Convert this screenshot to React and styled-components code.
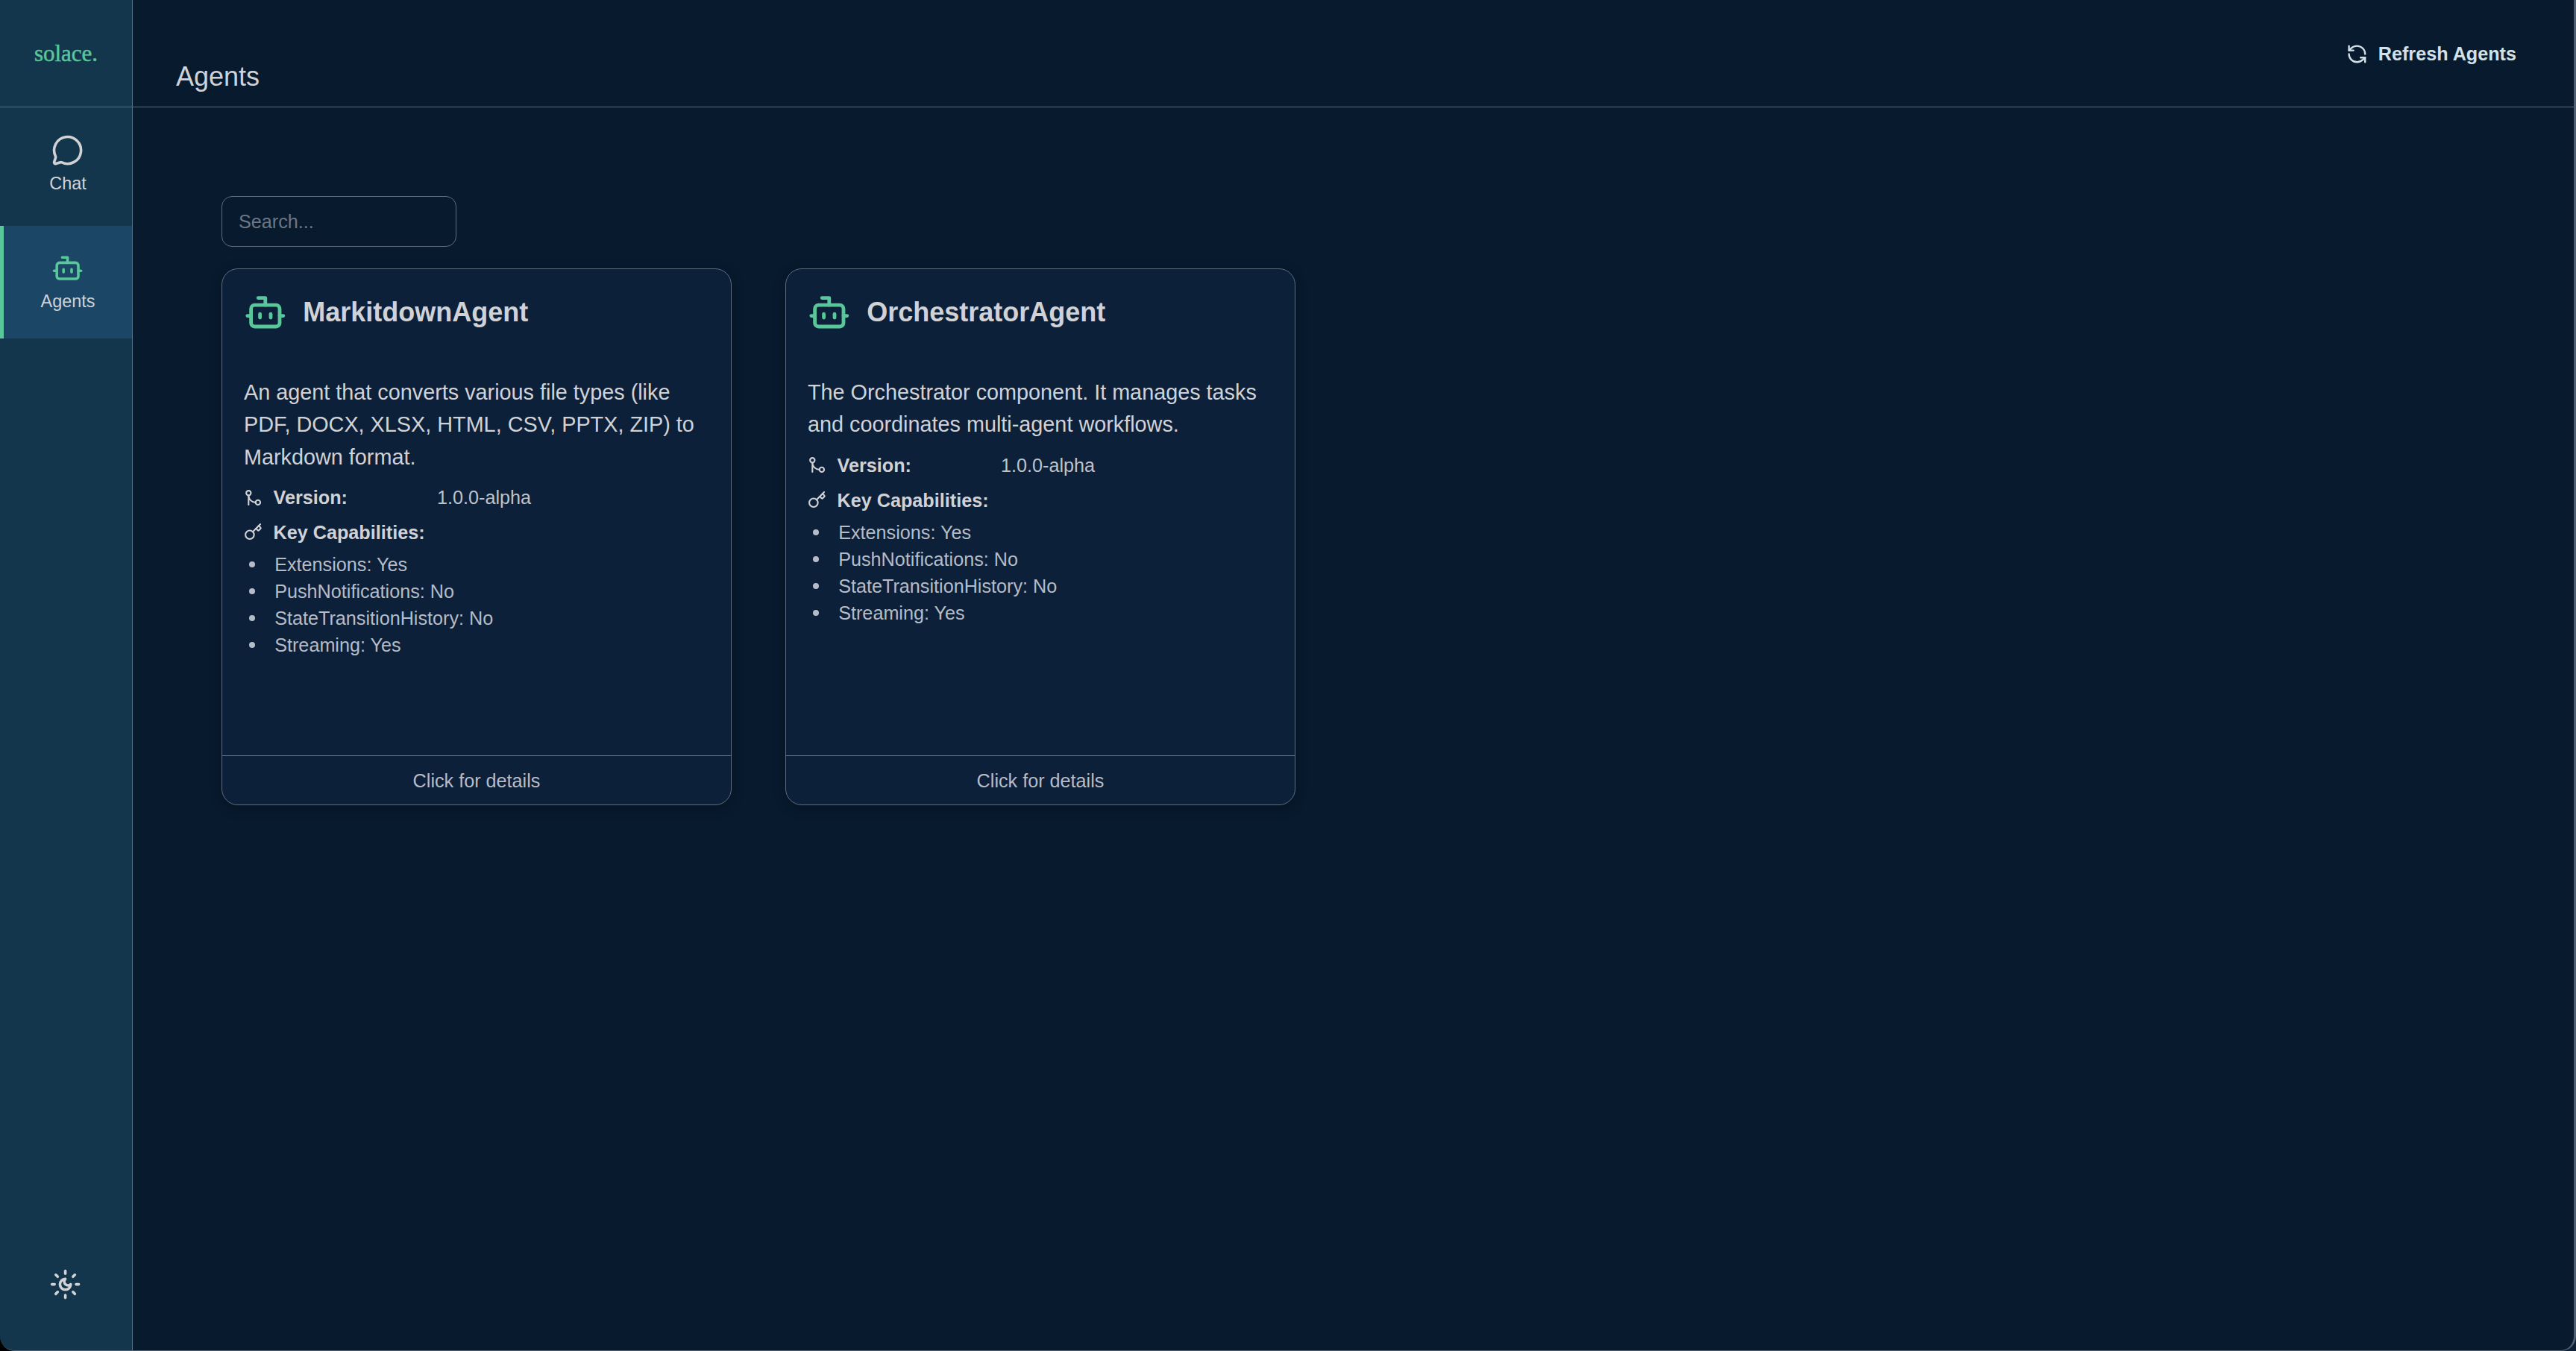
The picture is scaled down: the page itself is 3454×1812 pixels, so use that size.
import React from "react";
import styled, { createGlobalStyle } from "styled-components";
import { Bot, GitMerge, Key, MessageCircle, RefreshCcw } from "lucide-react";

const agents = [
	{
		name: "MarkitdownAgent",
		description:
			"An agent that converts various file types (like PDF, DOCX, XLSX, HTML, CSV, PPTX, ZIP) to Markdown format.",
	},
	{
		name: "OrchestratorAgent",
		description:
			"The Orchestrator component. It manages tasks and coordinates multi-agent workflows.",
	},
];

const capabilities = [
	"Extensions: Yes",
	"PushNotifications: No",
	"StateTransitionHistory: No",
	"Streaming: Yes",
];

const green = "#58c79a";
const line = "#5d6e80";
const textColor = "#d1d2d6";

const GlobalStyle = createGlobalStyle`
	html, body {
		margin: 0;
		padding: 0;
		background: linear-gradient(to right, #000 50%, #0d2035 50%);
	}
	* {
		box-sizing: border-box;
	}
`;

const Shell = styled.div`
	width: 3454px;
	height: 1812px;
	display: flex;
	overflow: hidden;
	border-right: 3px solid #4f6072;
	border-bottom: 1px solid #4f6072;
	border-radius: 0 0 20px 20px;
	background: #071a2e;
	font-family: "Liberation Sans", Arial, sans-serif;
	color: ${textColor};
`;

const Sidebar = styled.aside`
	width: 178px;
	flex-shrink: 0;
	display: flex;
	flex-direction: column;
	background: #14364c;
	border-right: 1px solid ${line};
`;

const Logo = styled.div`
	height: 144px;
	flex-shrink: 0;
	display: flex;
	align-items: center;
	justify-content: center;
	border-bottom: 1px solid ${line};
	font-family: "Liberation Serif", serif;
	font-size: 31px;
	-webkit-text-stroke: 0.5px ${green};
	color: ${green};
`;

const Nav = styled.nav`
	display: flex;
	flex-direction: column;
	gap: 7px;
	flex: 1;
	padding-top: 1px;
`;

const NavItem = styled.div`
	height: 151px;
	display: flex;
	flex-direction: column;
	align-items: center;
	justify-content: center;
	gap: 7px;
	border-left: 5px solid ${(p) => (p.$active ? green : "transparent")};
	background: ${(p) => (p.$active ? "#1b4666" : "transparent")};
	color: ${(p) => (p.$active ? green : textColor)};
`;

const NavLabel = styled.span`
	font-size: 23.4px;
	line-height: 30px;
	color: ${textColor};
`;

const ThemeButton = styled.div`
	height: 135px;
	flex-shrink: 0;
	display: flex;
	align-items: flex-start;
	justify-content: center;
	padding: 25px 2px 0 0;
	color: ${textColor};
`;

const Main = styled.main`
	flex: 1;
	display: flex;
	flex-direction: column;
	min-width: 0;
`;

const Header = styled.header`
	height: 144px;
	flex-shrink: 0;
	display: flex;
	justify-content: space-between;
	padding: 0 77px 0 58px;
	border-bottom: 1px solid ${line};
`;

const Title = styled.h1`
	align-self: flex-end;
	margin: 0 0 15px;
	font-size: 36px;
	line-height: 50px;
	font-weight: 400;
`;

const RefreshButton = styled.div`
	align-self: flex-start;
	margin-top: 54px;
	display: flex;
	align-items: center;
	gap: 14.4px;
	font-size: 25.2px;
	line-height: 36px;
	font-weight: 700;
	color: #d2e0e8;
`;

const Content = styled.div`
	padding: 119px 119px 0;
	display: flex;
	flex-direction: column;
	gap: 29px;
`;

const SearchInput = styled.input`
	width: 315px;
	height: 68px;
	padding: 0 22px;
	border: 1px solid ${line};
	border-radius: 14px;
	outline: none;
	background: transparent;
	font-family: inherit;
	font-size: 25.2px;
	color: ${textColor};
	&::placeholder {
		color: #6b7785;
		opacity: 1;
	}
`;

const CardRow = styled.div`
	display: flex;
	gap: 72px;
`;

const Card = styled.article`
	width: 684px;
	height: 720px;
	display: flex;
	flex-direction: column;
	border: 1px solid ${line};
	border-radius: 22px;
	background: #0d2039;
	box-shadow: 0 4px 16px rgba(0, 0, 0, 0.25);
`;

const CardBody = styled.div`
	flex: 1;
	padding: 29px 29px 0;
`;

const CardHeader = styled.div`
	display: flex;
	align-items: center;
	gap: 21.6px;
	margin-bottom: 57.6px;
	color: ${green};
`;

const CardTitle = styled.h2`
	margin: 0;
	font-size: 36px;
	line-height: 50px;
	font-weight: 700;
	color: ${textColor};
`;

const Description = styled.p`
	margin: 0 0 14.4px;
	font-size: 28.8px;
	line-height: 43.2px;
`;

const InfoRow = styled.div`
	display: flex;
	align-items: center;
	gap: 14.4px;
	margin-bottom: ${(p) => p.$gap || "10.8px"};
	font-size: 25.2px;
	line-height: 36px;
`;

const InfoLabel = styled.span`
	width: ${(p) => p.$width || "auto"};
	font-weight: 700;
`;

const InfoValue = styled.span`
	color: #bcc3cd;
`;

const CapabilityList = styled.ul`
	margin: 0;
	padding: 0 0 0 7.4px;
	list-style: none;
	font-size: 25.2px;
	line-height: 36px;
	color: #b5bcc7;
`;

const CapabilityItem = styled.li`
	display: flex;
	align-items: center;
	gap: 25.8px;
	&::before {
		content: "";
		width: 8px;
		height: 8px;
		border-radius: 50%;
		background: currentColor;
	}
`;

const CardFooter = styled.div`
	padding: 14.5px;
	border-top: 1px solid ${line};
	text-align: center;
	font-size: 25.2px;
	line-height: 36px;
	color: #b5bcc7;
`;

// lucide's current sun-moon has broken rays, the reference has the full ring
function ThemeIcon() {
	return (
		<svg
			width="43.2"
			height="43.2"
			viewBox="0 0 24 24"
			fill="none"
			stroke="currentColor"
			strokeWidth="2"
			strokeLinecap="round"
			strokeLinejoin="round"
		>
			<path d="M12 8a2.83 2.83 0 0 0 4 4 4 4 0 1 1-4-4" />
			<path d="M12 2v2" />
			<path d="M12 20v2" />
			<path d="m4.9 4.9 1.4 1.4" />
			<path d="m17.7 17.7 1.4 1.4" />
			<path d="M2 12h2" />
			<path d="M20 12h2" />
			<path d="m6.3 17.7-1.4 1.4" />
			<path d="m19.1 4.9-1.4 1.4" />
		</svg>
	);
}

function AgentCard({ name, description }) {
	return (
		<Card>
			<CardBody>
				<CardHeader>
					<Bot size={57.6} />
					<CardTitle>{name}</CardTitle>
				</CardHeader>
				<Description>{description}</Description>
				<InfoRow>
					<GitMerge size={25.2} />
					<InfoLabel $width="205px">Version:</InfoLabel>
					<InfoValue>1.0.0-alpha</InfoValue>
				</InfoRow>
				<InfoRow $gap="7.2px">
					<Key size={25.2} />
					<InfoLabel>Key Capabilities:</InfoLabel>
				</InfoRow>
				<CapabilityList>
					{capabilities.map((item) => (
						<CapabilityItem key={item}>{item}</CapabilityItem>
					))}
				</CapabilityList>
			</CardBody>
			<CardFooter>Click for details</CardFooter>
		</Card>
	);
}

export default function App() {
	return (
		<>
			<GlobalStyle />
			<Shell>
				<Sidebar>
					<Logo>solace.</Logo>
					<Nav>
						<NavItem>
							<MessageCircle size={43.2} />
							<NavLabel>Chat</NavLabel>
						</NavItem>
						<NavItem $active>
							<Bot size={43.2} />
							<NavLabel>Agents</NavLabel>
						</NavItem>
					</Nav>
					<ThemeButton>
						<ThemeIcon />
					</ThemeButton>
				</Sidebar>
				<Main>
					<Header>
						<Title>Agents</Title>
						<RefreshButton>
							<RefreshCcw size={28.8} />
							Refresh Agents
						</RefreshButton>
					</Header>
					<Content>
						<SearchInput placeholder="Search..." />
						<CardRow>
							{agents.map((agent) => (
								<AgentCard key={agent.name} {...agent} />
							))}
						</CardRow>
					</Content>
				</Main>
			</Shell>
		</>
	);
}
